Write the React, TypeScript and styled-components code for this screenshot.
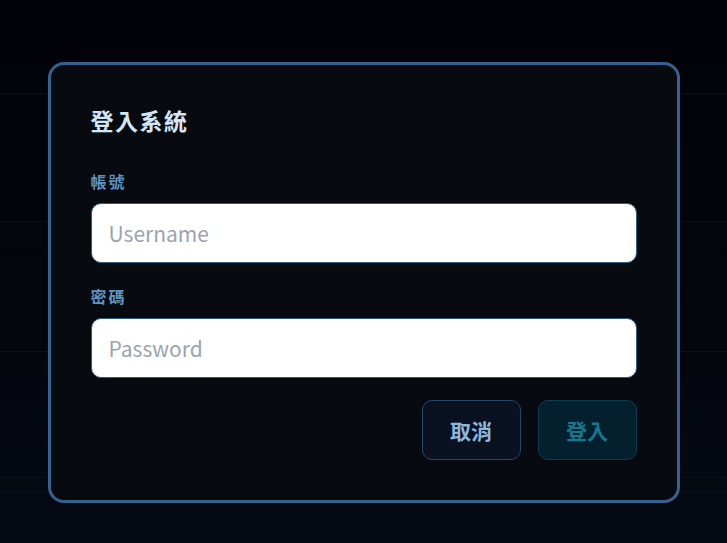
import React from "react";
import styled, { createGlobalStyle } from "styled-components";

const GlobalStyle = createGlobalStyle`
    html, body {
        margin: 0;
        padding: 0;
        background: #02030a;
    }
    * {
        box-sizing: border-box;
    }
`;

const Page = styled.div`
    position: relative;
    height: 543px;
    overflow: hidden;
    background: linear-gradient(180deg, #02030a 0%, #03050c 60%, #050a14 100%);
    font-family: "Noto Sans CJK TC", "Noto Sans", sans-serif;
`;

const Backdrop = styled.div`
    display: flex;
    flex-direction: column;
    padding-top: 93px;
`;

const BackRow = styled.div<{ $h: number }>`
    height: ${(p) => p.$h}px;
    border-top: 1px solid #0a0f1a;
`;

const Overlay = styled.div`
    position: absolute;
    inset: 0;
    display: flex;
    justify-content: center;
    align-items: flex-start;
    padding-top: 62px;
`;

const Card = styled.div`
    width: 632px;
    padding: 40px 40px 40px 40px;
    background: #070a0f;
    border: 3px solid #37618e;
    border-radius: 16px;
    display: flex;
    flex-direction: column;
`;

const Title = styled.h2`
    margin: 0 0 36px 0;
    font-size: 23px;
    line-height: 30px;
    font-weight: 700;
    letter-spacing: 1.5px;
    color: #d4e6f6;
`;

const Label = styled.label`
    display: block;
    font-size: 16px;
    line-height: 20px;
    font-weight: 700;
    letter-spacing: 2px;
    color: #5d93c2;
    margin-bottom: 12px;
`;

const Input = styled.input`
    display: block;
    width: 100%;
    height: 60px;
    padding: 0 17px;
    border: 1px solid #2f5b82;
    border-radius: 10px;
    background: #ffffff;
    font-family: "Noto Sans CJK TC", "Noto Sans", sans-serif;
    font-size: 21px;
    color: #1f2937;
    outline: none;
    margin-bottom: 23px;

    &::placeholder {
        color: #9ca3af;
    }
`;

const Actions = styled.div`
    display: flex;
    justify-content: flex-end;
    gap: 17px;
    margin-top: -1px;
`;

const Button = styled.button<{ $primary?: boolean }>`
    width: 99px;
    height: 60px;
    border-radius: 10px;
    border: 1px solid ${(p) => (p.$primary ? "#0d3b52" : "#29476a")};
    background: ${(p) => (p.$primary ? "#04202e" : "#0a1120")};
    color: ${(p) => (p.$primary ? "#17788f" : "#8cb7dc")};
    font-family: "Noto Sans CJK TC", "Noto Sans", sans-serif;
    font-size: 21px;
    font-weight: 700;
    cursor: pointer;
`;

const App = () => {
    return (
        <Page>
            <GlobalStyle />
            <Backdrop>
                <BackRow $h={128} />
                <BackRow $h={130} />
                <BackRow $h={126} />
                <BackRow $h={14} />
                <BackRow $h={60} />
            </Backdrop>
            <Overlay>
                <Card>
                    <Title>登入系統</Title>
                    <Label>帳號</Label>
                    <Input placeholder="Username" />
                    <Label>密碼</Label>
                    <Input type="password" placeholder="Password" />
                    <Actions>
                        <Button>取消</Button>
                        <Button $primary>登入</Button>
                    </Actions>
                </Card>
            </Overlay>
        </Page>
    );
};

export default App;
